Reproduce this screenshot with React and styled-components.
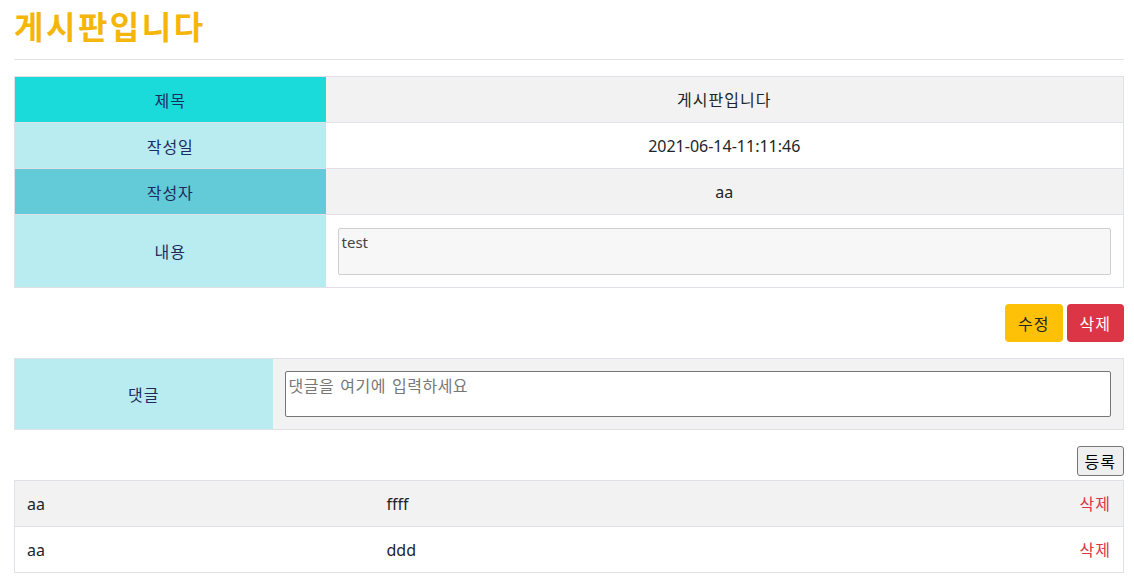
import React from "react";
import styled, { createGlobalStyle } from "styled-components";

const Global = createGlobalStyle`
  html, body { margin: 0; padding: 0; background: #fff; }
  body {
    font-family: "Noto Sans", "Noto Sans CJK KR", sans-serif;
    font-size: 16px;
    color: #212529;
  }
  * { box-sizing: border-box; }
`;

const Page = styled.div`
  padding: 0 10px 0 14px;
  width: 1134px;
`;

const Title = styled.h2`
  margin: 0;
  padding-top: 5px;
  height: 47px;
  font-family: "Noto Sans CJK KR", sans-serif;
  font-size: 32px;
  font-weight: 700;
  letter-spacing: 2.5px;
  line-height: 40px;
  color: #f5b60b;
`;

const Rule = styled.hr`
  margin: 12px 0 16px;
  border: 0;
  border-top: 1px solid #e3e3e3;
`;

const Table = styled.table`
  width: 1110px;
  border-collapse: collapse;
  border: 1px solid #dee2e6;
  table-layout: fixed;
`;

const Row = styled.tr`
  background: ${(p) => (p.$shade ? "#f2f2f2" : "#fff")};
`;

const Head = styled.td`
  width: ${(p) => p.$w};
  background: ${(p) => p.$bg};
  color: #1e2a5e;
  text-align: center;
  vertical-align: middle;
  padding: 0 12px;
  line-height: 24px;
  height: ${(p) => p.$h || "46px"};
  border-top: 1px solid #dee2e6;
  font-family: "Noto Sans CJK KR", sans-serif;
  font-size: 16px;
  letter-spacing: 1px;
`;

const Cell = styled.td`
  text-align: ${(p) => p.$align || "center"};
  vertical-align: middle;
  padding: ${(p) => p.$pad || "0 12px"};
  line-height: 24px;
  height: 46px;
  border-top: 1px solid #dee2e6;
  color: #212529;
  font-size: 16px;
`;

const Ko = styled.span`
  font-family: "Noto Sans CJK KR", sans-serif;
  letter-spacing: 1px;
  line-height: 24px;
  color: ${(p) => p.$color || "inherit"};
`;

const ContentBox = styled.div`
  height: 47px;
  border: 1px solid #cfcfcf;
  border-radius: 2px;
  background: #f7f7f7;
  text-align: left;
  padding: 2px 3px;
  line-height: 22px;
  font-size: 15px;
  color: #444;
`;

const Actions = styled.div`
  display: flex;
  justify-content: flex-end;
  gap: 4px;
  margin: 16px 0;
`;

const Btn = styled.button`
  height: 38px;
  padding: 0 13px;
  border: 0;
  border-radius: 4px;
  font-family: "Noto Sans CJK KR", sans-serif;
  font-size: 16px;
  letter-spacing: 1px;
  background: ${(p) => p.$bg};
  color: ${(p) => p.$fg};
`;

const CommentInput = styled.textarea`
  display: block;
  width: 100%;
  height: 46px;
  border: 1px solid #767676;
  border-radius: 2px;
  padding: 2px 3px;
  resize: none;
  font-family: "Noto Sans CJK KR", sans-serif;
  font-size: 16px;
  letter-spacing: 0.5px;
  word-spacing: 2px;
  line-height: 22px;
  background: #fff;
  &::placeholder { color: #777; }
`;

const SubmitRow = styled.div`
  display: flex;
  justify-content: flex-end;
  margin: 16px 0 4px;
`;

const SmallBtn = styled.button`
  height: 30px;
  padding: 0 7px;
  border: 1px solid #767676;
  border-radius: 3px;
  background: #efefef;
  font-family: "Noto Sans CJK KR", sans-serif;
  font-size: 16px;
  letter-spacing: 1px;
  color: #000;
`;

const comments = [
  { who: "aa", text: "ffff" },
  { who: "aa", text: "ddd" },
];

export default function App() {
  return (
    <Page>
      <Global />
      <Title>게시판입니다</Title>
      <Rule />
      <Table>
        <tbody>
          <Row $shade>
            <Head $w="311px" $bg="#1adbda">제목</Head>
            <Cell><Ko>게시판입니다</Ko></Cell>
          </Row>
          <Row>
            <Head $bg="#b8ecf1">작성일</Head>
            <Cell>2021-06-14-11:11:46</Cell>
          </Row>
          <Row $shade>
            <Head $bg="#63cbd8">작성자</Head>
            <Cell>aa</Cell>
          </Row>
          <Row>
            <Head $bg="#b8ecf1" $h="73px">내용</Head>
            <Cell $pad="12px 12px 12px">
              <ContentBox>test</ContentBox>
            </Cell>
          </Row>
        </tbody>
      </Table>
      <Actions>
        <Btn $bg="#ffc107" $fg="#212529">수정</Btn>
        <Btn $bg="#dc3545" $fg="#fff">삭제</Btn>
      </Actions>
      <Table>
        <tbody>
          <Row $shade>
            <Head $w="258px" $bg="#b8ecf1" $h="71px">댓글</Head>
            <Cell $pad="12px 12px 12px">
              <CommentInput placeholder="댓글을 여기에 입력하세요" />
            </Cell>
          </Row>
        </tbody>
      </Table>
      <SubmitRow>
        <SmallBtn>등록</SmallBtn>
      </SubmitRow>
      <Table>
        <tbody>
          {comments.map((c, i) => (
            <Row key={i} $shade={i % 2 === 0}>
              <Cell $align="left" style={{ width: 360 }}>{c.who}</Cell>
              <Cell $align="left">{c.text}</Cell>
              <Cell $align="right" style={{ width: 120 }}>
                <Ko $color="#dc3545">삭제</Ko>
              </Cell>
            </Row>
          ))}
        </tbody>
      </Table>
    </Page>
  );
}
